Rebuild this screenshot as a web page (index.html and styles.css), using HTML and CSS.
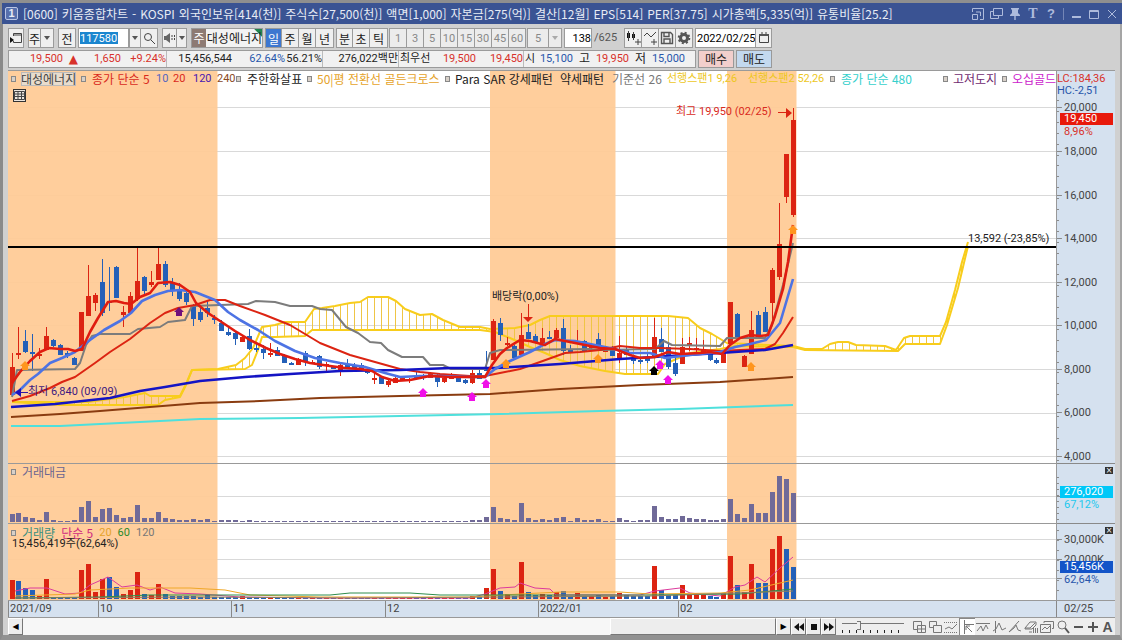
FILE: index.html
```html
<!DOCTYPE html>
<html lang="ko">
<head>
<meta charset="utf-8">
<title>[0600] 키움종합차트</title>
<link rel="stylesheet" href="styles.css">
</head>
<body>
<header class="title">
  <span class="win-no">1</span>
  <h1><span>[0600]</span><span>키움종합차트</span><span>-</span><span>KOSPI</span><span>외국인보유[414(천)]</span><span>주식수[27,500(천)]</span><span>액면[1,000]</span><span>자본금[275(억)]</span><span>결산[12월]</span><span>EPS[514]</span><span>PER[37.75]</span><span>시가총액[5,335(억)]</span><span>유통비율[25.2]</span></h1>
  <nav class="win-tools">
    <button aria-label="화면 축소"><svg width="12" height="12" viewBox="0 0 12 12"><path d="M.5 4V.5h11v11H8M.5 6.5h5v5h-5zM4 4h4.500v4"/></svg></button>
    <button aria-label="화면 복사"><svg width="13" height="12" viewBox="0 0 13 12"><path d="M3.500.5h9v7h-9zM3.500 3.500h-3v7h8v-3"/></svg></button>
    <button aria-label="고정"><svg width="12" height="12" viewBox="0 0 12 12"><path class="solid" d="M2 0h8v1.500H9V5l2 2v1H6.700v4H5.300V8H1V7l2-2V1.500H2z"/></svg></button>
    <button aria-label="글꼴" class="serif">T</button>
    <button aria-label="도움말" class="mark">?</button>
    <i></i>
    <button aria-label="최소화"><svg width="12" height="12" viewBox="0 0 12 12"><path class="thick" d="M2 9h9"/></svg></button>
    <button aria-label="최대화"><svg width="12" height="12" viewBox="0 0 12 12"><path d="M1.500 2.500h9v8h-9zM1.500 3.500h9"/></svg></button>
    <button aria-label="닫기"><svg width="12" height="12" viewBox="0 0 12 12"><path d="M2 2l8 8M10 2l-8 8"/></svg></button>
  </nav>
</header>
<main class="window">
  <form class="toolbar">
    <button type="button" class="b w16" aria-label="메뉴 열기"><svg width="14" height="13" viewBox="0 0 14 13"><path d="M4.500 4V1.500h8v9h-8V9M4.500 3h8"/><path class="fill" d="M1 5v6l4-3z"/></svg></button>
    <div class="pair g4"><button type="button" class="b w13">주</button><button type="button" class="b w13 dd" aria-label="종목 구분"></button></div>
    <button type="button" class="b w18 g4">전</button>
    <div class="pair g2"><input class="code" aria-label="종목코드" value="117580"><button type="button" class="b w12 dd" aria-label="종목 목록"></button><button type="button" class="b w17" aria-label="종목 검색"><svg width="13" height="13" viewBox="0 0 13 13"><circle cx="5" cy="5" r="3.500"/><path d="M8 8l4 4"/></svg></button></div>
    <div class="pair g3"><button type="button" class="b w15" aria-label="소리"><svg width="13" height="12" viewBox="0 0 13 12"><path class="fill grey" d="M1 4h2l4-3v10L3 8H1z"/><path stroke-dasharray="2 1" d="M9 3v6M11.500 3v6"/></svg></button><button type="button" class="b w10 dd" aria-label="소리 설정"></button></div>
    <div class="stock g3"><b>주</b><span>대성에너지</span></div>
    <div class="group g2"><button type="button" class="b w17 on">일</button><button type="button" class="b w17">주</button><button type="button" class="b w17">월</button><button type="button" class="b w18">년</button></div>
    <div class="group g2"><button type="button" class="b w17">분</button><button type="button" class="b w17">초</button><button type="button" class="b w18">틱</button></div>
    <div class="group mins"><button type="button" class="b">1</button><button type="button" class="b">3</button><button type="button" class="b">5</button><button type="button" class="b">10</button><button type="button" class="b">15</button><button type="button" class="b">30</button><button type="button" class="b">45</button><button type="button" class="b">60</button></div>
    <div class="pair mins g2"><select class="sel" aria-label="분 간격"><option>5</option></select><span class="b w13 dd pale"></span></div>
    <input class="count g2" aria-label="조회 개수" value="138"><span class="total">/625</span>
    <div class="pair icons"><button type="button" class="b" aria-label="봉 추가"><svg width="15" height="14" viewBox="0 0 15 14"><path class="fill" d="M1 2h3v5H1zM6 3h3v4H6z"/><path d="M2.500 0v10M7.500 1v8M9 11h6M12 8v6"/></svg></button><button type="button" class="b" aria-label="지표 추가"><svg width="15" height="14" viewBox="0 0 15 14"><path d="M1 5l3-3 4 4 5-5M8 11h6M11 8v6"/></svg></button><button type="button" class="b" aria-label="저장"><svg width="14" height="14" viewBox="0 0 14 14"><path class="save" d="M1.500 1.500h9l2 2v9h-11zM4 2v3.500h5V2M4 12V8h6v4"/></svg></button><button type="button" class="b" aria-label="설정"><svg width="14" height="14" viewBox="0 0 14 14"><circle cx="7" cy="7" r="3.500" class="w3"/><circle cx="7" cy="7" r="5.300" class="w2" stroke-dasharray="2 2.160"/></svg></button></div>
    <div class="pair g2"><input class="date" aria-label="날짜" value="2022/02/25"><button type="button" class="b w17" aria-label="달력"><svg width="12" height="12" viewBox="0 0 12 12"><path d="M1.500 2.500h9v8h-9zM4 0v3M8 0v3"/><path class="w2" d="M1 3h10"/></svg></button></div>
  </form>

  <div class="quote-row">
    <div class="quote">
      <span class="up">19,500</span><span class="up tri">▲</span><span class="up">1,650</span><span class="up">+9.24%</span>
      <span class="sep">15,456,544</span><span class="down">62.64%</span><span>56.21%</span>
      <span class="sep">276,022백만</span><span class="sep left">최우선</span><span class="up">19,500</span><span class="up">19,450</span>
      <span class="sep left">시</span><span class="down">15,100</span><span class="k">고</span><span class="up">19,950</span><span class="k">저</span><span class="down">15,000</span>
    </div>
    <button class="order buy">매수</button>
    <button class="order sell">매도</button>
  </div>

  <section class="chart">
    <div class="plot" id="plot">
      <svg id="canvas" viewBox="8 71 1048 529" preserveAspectRatio="none" role="img" aria-label="대성에너지 일봉 차트"></svg>
      <div class="legend">
        <i></i><span class="boxed">대성에너지</span><i></i><span class="c-red">종가 단순 5</span><span class="c-blue num">10</span><span class="c-red num">20</span><span class="c-indigo num">120</span><span class="c-brown num">240</span>
        <i></i><span>주한화살표</span><i></i><span class="c-orange">50|평 전환선 골든크로스</span><i></i><span>Para SAR 강세패턴</span><span>약세패턴</span><span class="c-grey">기준선 26</span><span class="c-yellow">선행스팬1 9,26</span><span class="c-yellow">선행스팬2 52,26</span>
        <i></i><span class="c-cyan">종가 단순 480</span><i></i><span class="c-plum">고저도지</span><i></i><span class="c-magenta">오십골드</span>
      </div>
      <button class="grid-btn" aria-label="표 보기"><svg width="11" height="11" viewBox="0 0 11 11"><path d="M.5 1.500h10v8H.5zM.5 4h10M.5 6.500h10M4 1.500v8M7.500 1.500v8"/></svg></button>
      <div class="sub amount"><i></i><span class="c-slate">거래대금</span></div>
      <div class="sub volume"><i></i><span class="c-teal">거래량</span><span class="c-pink">단순 5</span><span class="c-orange num">20</span><span class="c-green num">60</span><span class="c-grey num">120</span></div>
    </div>
    <aside class="axis" id="axis">
      <svg id="ticks" viewBox="0 71 59 529" preserveAspectRatio="none"></svg>
    </aside>
  </section>
  <div class="dates" id="dates"></div>

  <footer class="bottom">
    <button class="s" aria-label="왼쪽으로">◀</button>
    <div class="track"><div class="thumb"></div></div>
    <button class="s" aria-label="오른쪽으로">▶</button>
    <button class="s" aria-label="뒤로 감기"><svg width="10" height="8" viewBox="0 0 10 8"><path class="fill" d="M5 0v8L0 4zM10 0v8L5 4z"/></svg></button>
    <button class="s" aria-label="정지"><svg width="8" height="8" viewBox="0 0 8 8"><path class="fill" d="M1 1h6v6H1z"/></svg></button>
    <button class="s" aria-label="앞으로 감기"><svg width="10" height="8" viewBox="0 0 10 8"><path class="fill" d="M0 0v8l5-4zM5 0v8l5-4z"/></svg></button>
    <div class="zoom"><input type="range" aria-label="속도" min="0" max="100" value="25"><div class="marks"></div></div>
    <div class="tools">
      <button aria-label="창 추가"><svg viewBox="0 0 14 14"><path d="M1.500 1.500h8v8h-8z"/><path class="paper" d="M5.500 5.500h8v7h-8zM9.500 6v6M6 9h7"/></svg></button>
      <button aria-label="창 겹침"><svg viewBox="0 0 14 14"><path d="M1.500 1.500h7v6h-7z"/><path class="paper" d="M5.500 5.500h8v7h-8z"/></svg></button>
      <button aria-label="점선"><svg viewBox="0 0 14 14"><path stroke-dasharray="1 1" d="M0 2.500h14M0 12.500h14"/><path d="M1 9l4-2 3 2 5-5"/></svg></button>
      <button aria-label="시작점" class="on"><svg viewBox="0 0 14 14"><path d="M3.500 0v14M3 4.500h10M5 6l6 6M5 6v4M5 6h4"/></svg></button>
      <button aria-label="고점"><svg viewBox="0 0 14 14"><path d="M0 3.500h14M1 11l4-5 2 5 3-6 2 4"/></svg></button>
      <button aria-label="파동"><svg viewBox="0 0 14 14"><path d="M3.500 1v12M1 11l3-2 3-6 3 7 4-2"/></svg></button>
      <button aria-label="추세"><svg viewBox="0 0 14 14"><path d="M1 12L11 1M1 12l5-4 2-3 2 5 3 1"/></svg></button>
      <button aria-label="모두 지우기"><svg viewBox="0 0 14 14"><path d="M1 8l5-6h6v3L8 9H1zM1 8h5l5-5M9.500 8v5M11.500 8v5M13.500 8v5M5 12h3"/></svg></button>
      <button aria-label="차트 저장"><svg viewBox="0 0 14 14"><path d="M4 3V1.500h9.500v7H12M.5 4.500h10v8H.5zM2 10l3-3 2 2 3-3"/></svg></button>
      <button aria-label="확대경"><svg viewBox="0 0 14 14"><circle cx="6" cy="5" r="4"/><path class="w2" d="M9 8l4 5"/></svg></button>
      <button aria-label="축소"><svg viewBox="0 0 14 14"><path class="w2" d="M3 7h9"/></svg></button>
      <button aria-label="확대"><svg viewBox="0 0 14 14"><path class="w2" d="M2 7h10M7 2v10"/></svg></button>
      <button class="auto">A</button>
    </div>
  </footer>
</main>
<script src="chart.js"></script>
</body>
</html>
```
FILE: styles.css
```css
* { box-sizing: border-box; }
body {
  margin: 0;
  min-height: 100vh;
  display: flex;
  flex-direction: column;
  padding-top: 3px;
  background: #8f8f8f;
  font: 12px/14px "Noto Sans CJK KR", sans-serif;
  color: #222;
}
button, input, select { font: inherit; color: inherit; margin: 0; padding: 0; border: 0; background: none; border-radius: 0; }
svg { display: block; }
svg path, svg circle { fill: none; stroke: #444; }
svg .fill { fill: #111; stroke: none; }
svg .grey { fill: #666; }
svg .w2 { stroke-width: 2; stroke: #555; }
svg .w3 { stroke-width: 3; stroke: #555; }
svg .save { stroke: #555; stroke-width: 1.4; }

.title {
  display: flex;
  align-items: center;
  height: 21px;
  margin: 0 0 0 2px;
  padding: 0 3px;
  background: #3a5393;
  color: #e8ecf5;
}
.win-no { width: 13px; height: 13px; border: 1px solid #b9c5e4; border-radius: 2px; text-align: center; font: bold 11px/11px "Liberation Sans", sans-serif; background: #5770ad; }
.title h1 { flex: 1; display: flex; gap: 4px; margin: 0 0 0 5px; font-size: 12px; font-weight: normal; white-space: nowrap; }
.win-tools { display: flex; align-items: center; gap: 6px; padding-right: 1px; }
.win-tools button { min-width: 12px; }
.win-tools svg path { stroke: #aebbdc; }
.win-tools svg .solid { fill: #aebbdc; stroke: none; }
.win-tools svg .thick { stroke-width: 2; }
.win-tools i { width: 1px; height: 12px; background: #7486b6; }
.serif { font: bold 14px/14px "Liberation Serif", serif; color: #aebbdc; }
.mark { font: bold 13px/14px "Liberation Sans", sans-serif; color: #aebbdc; }

.window {
  flex: 1;
  display: flex;
  flex-direction: column;
  padding: 4px 5px 0 5px;
  border: solid #999;
  border-width: 0 2px 5px 3px;
  border-color: #999 #a5a5a5 #919191 #8a8a8a;
  background: #d0d0d0;
}

.toolbar { display: flex; height: 20px; align-items: stretch; font-size: 12px; line-height: 17px; }
.pair, .group { display: flex; }
.b { display: flex; align-items: center; justify-content: center; border: 1px solid #9b9b9b; background: #efefef; overflow: hidden; flex: none; }
.pair .b + .b, .group .b + .b { border-left: 0; }
.w10 { width: 10px; } .w12 { width: 12px; } .w13 { width: 13px; } .w15 { width: 15px; }
.w16 { width: 16px; } .w17 { width: 17px; } .w18 { width: 18px; }
.g2 { margin-left: 2px; } .g3 { margin-left: 4px; } .g4 { margin-left: 4px; }
.dd::before { content: ""; border: 3px solid transparent; border-top: 4px solid #555; border-bottom: 0; }
.pale::before { border-top-color: #aaa; }
.code { width: 51px; border: 1px solid #9b9b9b; background: linear-gradient(#1b86cf, #1b86cf) 1px 3px / 38px 12px no-repeat #fff; color: #fff; padding-left: 1px; }
.code, .count, .date, .total, .mins { font-family: Roboto, "Noto Sans CJK KR", sans-serif; font-size: 11px; }
.stock { display: flex; width: 72px; border: 1px solid #9b9b9b; background: linear-gradient(225deg, #23854f 5px, transparent 6px) #f3f3f3; white-space: nowrap; }
.stock b { width: 14px; text-align: center; background: #8d7a73; color: #fff; font-weight: normal; }
.stock span { padding-left: 1px; }
.on { background: #3c77d0; color: #fff; }
.mins { color: #888; margin-left: 1px; }
.mins .b { width: 18px; background: #ececec; }
.mins .b + .b { width: 17px; }
.sel { width: 22px; appearance: none; border: 1px solid #9b9b9b; background: #ececec; padding-left: 7px; }
.pair.mins .dd { width: 13px; border-left: 0; }
.count { width: 28px; border: 1px solid #9b9b9b; background: #fff; text-align: right; color: #000; }
.total { width: 32px; padding-left: 2px; line-height: 20px; color: #555; }
.icons .b { width: 18px; }
.icons .b + .b { width: 17px; }
.date { width: 60px; border: 1px solid #9b9b9b; border-right: 0; background: #fff; padding-left: 1px; color: #000; }

.quote-row { display: flex; height: 18px; margin: 2px 0 3px; gap: 2px; }
.quote {
  display: grid;
  grid-template-columns: 54px 15px 43px 45px 66px 53px 37px 76px 35px 43px 47px 11px 39px 17px 39px 17px 39px;
  width: 688px;
  padding-right: 6px;
  border: 1px solid #9b9b9b;
  background: #f1f1f1;
  font: 11px/16px Roboto, "Noto Sans CJK KR", sans-serif;
  text-align: right;
  white-space: nowrap;
}
.quote .sep { border-left: 1px solid #bbb; }
.quote .left { text-align: left; padding-left: 1px; }
.quote .k { font-size: 12px; }
.quote .tri { font-family: "DejaVu Sans", sans-serif; font-size: 12px; }
.up { color: #d8322b; }
.down { color: #2856ab; }
.order { width: 36px; border: 1px solid #999; line-height: 14px; }
.buy { background: #f2cfcc; }
.sell { background: #c3d9ef; }

.chart { flex: 1; display: flex; border-top: 1px solid #9a9a9a; margin-top: -1px; }
.plot { position: relative; flex: 1; background: #fff; overflow: hidden; white-space: nowrap; }
.plot > svg, .axis > svg { position: absolute; inset: 0; width: 100%; height: 100%; }
.legend {
  position: absolute;
  inset: 1px 0 auto 3px;
  display: grid;
  grid-template-columns: 10px 60px 11px 64px 17px 20px 24px 19px 11px 60px 10px 128px 10px 105px 52px 55px 81px 82px 11px 102px 10px 49px 10px 44px;
}
.legend i, .sub i { width: 5px; height: 6px; border: 1px solid #888; background: #d8d0c8; align-self: center; }
.num { font-family: Roboto, sans-serif; font-size: 11px; }
.boxed { justify-self: start; background: #e8dccd; color: #444; outline: 1px solid #bbb; outline-offset: -1px; }
.grid-btn { position: absolute; left: 5px; top: 18px; padding: 0; border: 1px solid #333; background: #ece6df; }
.sub { position: absolute; left: 3px; display: flex; gap: 6px; }
.amount { top: 74.5%; }
.volume { top: 86%; }
.note { position: absolute; transform: translateY(-50%); font: 11px/12px Roboto, "Noto Sans CJK KR", sans-serif; }

.c-red { color: #d92a1c; } .c-blue { color: #5566c0; } .c-indigo { color: #4a18b0; } .c-brown { color: #8a4a24; }
.c-orange { color: #e5a32a; } .c-grey { color: #777; } .c-cyan { color: #35d0cc; }
.c-yellow { color: #edc71d; font: 11px/14px Roboto, "Noto Sans CJK KR", sans-serif; }
.c-plum { color: #702a70; } .c-magenta { color: #cc22cc; } .c-slate { color: #6b6590; } .c-teal { color: #3a9080; }
.c-pink { color: #cf2a80; } .c-green { color: #2b8a2b; } .c-dark { color: #222; } .c-purple { color: #401880; }

.axis { position: relative; flex: none; width: 59px; background: #d5e1ef; border-left: 1px solid #999; font: 11px/11px Roboto, sans-serif; }
.axis > svg path { stroke: #888; }
.label { position: absolute; left: 7px; transform: translateY(-50%); color: #444; }
.label.edge { left: 0; }
.label.tag { left: 3px; right: 2px; padding-left: 4px; line-height: 12px; color: #fff; }
.tag.r { background: #e8190b; } .tag.k { background: #00c8f8; } .tag.n { background: #1254c8; }
.label.t-red { color: #d8322b; } .label.t-blue { color: #2856ab; } .label.t-cyan { color: #22c8ee; }
.close { position: absolute; right: 2px; width: 8px; height: 7px; background: #333; color: #fff; font: 8px/7px "DejaVu Sans", sans-serif; }

.dates { position: relative; height: 18px; background: #d5e1ef; border: solid #999; border-width: 1px 0; color: #444; font-family: Roboto, sans-serif; font-size: 11px; }
.dates span { position: absolute; top: 0; height: 16px; border-left: 1px solid #888; padding-left: 1px; line-height: 15px; }
.dates .last { left: auto; right: 0; width: 59px; padding-left: 7px; }

.bottom { display: flex; height: 17px; background: #eee; }
.s { display: flex; align-items: center; justify-content: center; width: 15px; border: 1px solid; border-color: #fff #777 #777 #fff; background: #ededed; color: #000; font: 8px/8px "DejaVu Sans", sans-serif; }
.track { flex: 1; display: flex; justify-content: flex-end; background: #f7f7f7; }
.thumb { width: 22%; border: 1px solid; border-color: #fff #777 #777 #fff; background: #ededed; }
.zoom { width: 72px; padding: 3px 4px 0 6px; }
.zoom input { display: block; width: 100%; height: 9px; appearance: none; background: linear-gradient(#777, #777) 0 2px / 100% 1px no-repeat; }
.zoom input::-webkit-slider-thumb { appearance: none; width: 4px; height: 9px; background: #eee; border: 1px solid #777; border-left: 0; }
.marks { height: 3px; background: repeating-linear-gradient(90deg, #222 0 1px, transparent 1px 7px); }
.tools { display: flex; padding-left: 3px; }
.tools button { display: flex; align-items: center; justify-content: center; width: 16px; flex: none; }
.tools button:nth-last-child(-n+4) { width: 15px; }
.tools svg { width: 14px; height: 14px; }
.tools svg path, .tools svg circle { stroke: #777; }
.tools svg .w2 { stroke: #555; }
.tools svg .paper { fill: #eee; }
.tools .on { background: #fff; border-left: 1px solid #888; border-top: 1px solid #888; }
.tools .auto { font: bold 14px/14px "Liberation Sans", sans-serif; color: #555; }
```
FILE: chart.js
```js
const RED = '#dc2412', BLUE = '#2460b8';
const svg = document.getElementById('canvas');
const NS = 'http://www.w3.org/2000/svg';
const xOf = i => 11.5 + 6.98 * i;

function add(tag, attrs, parent = svg) {
  const el = document.createElementNS(NS, tag);
  for (const k in attrs) el.setAttribute(k, attrs[k]);
  parent.appendChild(el);
}
const rect = (x, y, w, h, fill) => add('rect', { x, y, width: w, height: h, fill });
const path = (d, stroke, w = 1, fill = 'none') => add('path', { d, 'stroke-width': w, style: `stroke:${stroke};fill:${fill}`, 'stroke-linejoin': 'round' });
const pts = s => s.trim().split(/\s+/).map(p => p.split(',').map(Number));
const line = (s, stroke, w) => path('M' + s.trim().split(/\s+/).join('L'), stroke, w);

// Grid, highlighted periods and pane borders
for (const y of [107.5, 151.5, 195.5, 238.5, 282.5, 325.5, 369.5, 413.5, 456.5, 496.5, 539.5, 559.5, 578.5])
  path(`M8 ${y}H1056`, '#d9d9d9');
for (const [x, w] of [[8, 209.5], [490, 125.5], [727, 69.5]])
  add('rect', { x, y: 71, width: w, height: 529, fill: '#ffcb97', opacity: .95 });
path('M8 463.5H1056M8 523.5H1056', '#999');

// Ichimoku cloud
const spanA = '12,402 88,402 110,399 125,397 145,393 150,396 180,396 186,384 192,370 218,369 236,365 245,358 253,348 262,327 275,325 285,322 305,322 314,309 322,308 335,306 350,303 360,302 368,297 388,297 396,301 405,309 420,315 432,314 443,320 460,327 480,327 490,329 515,328 530,325 540,320 550,316 668,316 688,318 700,328 712,334 727,343 770,345 793,346 805,349 822,349 830,344 838,342 848,342 856,345 885,346 896,350 904,338 910,336 940,336 946,322 955,290 962,262 968,242';
const spanB = '12,402 60,405 158,405 165,400 180,397 186,385 192,370 245,369 252,365 258,350 262,337 275,337 305,336 312,330 480,330 495,332 510,338 530,347 545,353 560,360 580,366 605,371 625,374 658,374 665,364 690,353 720,349 735,346 793,347 805,350 898,351 905,344 940,344 947,325 958,288 968,246';
function at(list, x) {
  for (let k = 1; k < list.length; k++) {
    const [x0, y0] = list[k - 1], [x1, y1] = list[k];
    if (x <= x1) return y0 + (y1 - y0) * (x - x0) / (x1 - x0);
  }
  return list[list.length - 1][1];
}
const a = pts(spanA), b = pts(spanB);
let hatch = '';
for (let i = 7; i < 137; i++) {
  const x = Math.round(xOf(i)) + .5;
  hatch += `M${x} ${at(a, x)}V${at(b, x)}`;
}
path(hatch, '#efc545');
line(spanA, '#f8cd1c', 2);
line(spanB, '#f8cd1c', 2);

// Candles: direction, high, body top, body bottom, low
const candles = `R353,367,395,397 R327,353,355,359 B330,341,352,353 B334,352,353,371 R348,354,355,359 R327,336,350,350 B339,340,346,347 B344,345,355,355 B351,353,356,358 B357,358,365,365
R312,312,351,351 R265,296,316,316 R293,295,303,311 B259,282,313,316 B267,301,303,311 B266,267,298,298 R306,312,315,327 R292,296,313,313 R247,281,299,301 B276,277,291,294
R271,282,285,287 R248,264,280,280 B261,264,285,287 B278,283,291,296 B283,289,299,301 B291,293,302,305 B304,306,319,326 B305,312,320,322 B301,308,313,317 B315,318,320,324
B320,323,331,331 B328,332,335,336 B331,333,339,345 R335,337,342,342 B329,336,349,350 B342,348,350,352 B345,349,353,359 R343,353,355,357 B347,350,356,356 B354,355,363,363
B362,363,365,365 R358,359,365,365 B351,353,362,366 R360,362,363,364 B355,356,367,369 R362,364,365,373 B366,367,369,369 R363,365,370,376 B359,364,367,367 B363,366,368,368
B363,365,371,371 B368,370,373,374 R370,378,379,384 B377,377,384,384 R380,381,385,387 R377,378,383,383 R377,378,380,380 R378,379,381,383 B372,376,378,379 B374,376,378,380
R372,373,378,378 B373,375,382,387 R377,378,382,383 R373,375,379,379 B375,377,382,382 B379,380,383,384 R367,373,383,384 B370,373,379,379 B351,367,371,371 R319,321,360,360
B318,323,335,341 R337,343,345,346 B345,346,358,358 R313,335,355,355 B324,332,339,339 B334,336,343,343 R328,338,343,343 B331,337,338,338 R328,330,338,338 B319,328,351,355
B345,350,352,353 R330,341,344,344 B340,341,352,352 R345,346,347,350 B333,339,347,347 R346,348,352,352 B346,348,356,356 R336,353,358,363 B347,349,355,355 B355,359,361,364
B357,360,362,364 B353,358,361,363 R318,337,357,358 B328,339,352,352 B342,347,367,369 B358,363,374,376 R338,347,364,364 R337,343,346,351 R338,348,350,352 R340,349,353,355
B353,354,360,361 B358,360,363,364 R352,353,363,363 R302,302,344,344 B313,314,338,341 R355,356,367,367 R311,330,354,354 B311,315,337,337 B307,312,332,332 R268,270,303,325
R203,244,277,280 R154,154,197,203 R108,120,215,217`.split(/\s+/).map(s => [s[0], ...s.slice(1).split(',').map(Number)]);
candles.forEach(([dir, hi, top, bot, lo], i) => {
  const c = dir === 'R' ? RED : BLUE, x = Math.round(xOf(i));
  rect(x, hi, 1, Math.max(lo - hi, 1), c);
  rect(x - 2, top, 5, Math.max(bot - top, 2), c);
});

// Moving averages and base line
line('12,397 17,370 75,369 80,363 86,345 92,336 100,334 130,334 138,329 160,327 168,322 185,320 192,306 248,304 256,301 275,302 290,306 312,306 320,309 332,310 346,327 358,333 370,342 381,343 388,350 402,357 423,357 430,365 443,365 451,369 485,369 490,353 500,350 590,349 600,350 655,349 664,341 672,345 720,346 727,338 765,338 772,325 783,285 793,243', '#7c7c7c', 2);
line('12,401 30,396 50,388 62,382 75,377 95,363 110,352 130,339 150,323 165,313 178,308 195,305 210,300 225,300 240,306 265,315 290,325 320,343 350,355 375,362 400,369 420,372 440,374 470,376 485,376 500,373 520,369 540,362 565,353 580,352 600,350 620,346 640,348 660,348 690,349 720,351 740,350 765,349 775,344 783,333 793,317', '#dc2412', 2);
line('11,417 60,414 100,411 150,407 200,403 260,401 320,398 400,396 490,394 560,389 640,385 720,382 765,379 793,377', '#8a3c10', 2);
line('11,426 60,426 120,423 200,419 300,418 400,416 500,414 600,411 680,409 793,405', '#4fe0dc', 2);
line('11,407 55,404 110,398 140,391 165,387 200,381 245,377 290,374 340,371 400,370 450,368 495,368 560,364 620,359 670,356 720,353 765,350 793,345', '#1414c4', 2.6);
line('12,395 20,390 30,380 38,374 50,363 62,358 75,352 90,340 104,330 120,321 131,313 142,301 155,295 168,291 180,290 195,292 215,300 228,312 240,320 258,330 275,341 295,351 315,358 340,363 365,367 385,373 400,377 420,376 440,376 470,377 485,377 495,369 510,361 530,352 545,344 555,340 575,341 595,345 610,348 630,353 650,353 665,358 690,355 720,352 735,347 750,344 766,340 780,323 793,279', '#4d73e4', 2.6);
line('12,383 20,372 30,361 40,352 49,348 60,349 68,349 75,351 82,349 90,332 98,318 108,302 116,301 124,303 131,304 140,297 150,293 158,283 170,282 180,285 190,292 196,303 208,313 220,321 235,331 250,340 266,348 280,354 295,359 310,363 330,366 345,368 360,369 372,371 382,377 395,381 410,380 430,376 450,377 470,377 485,377 492,365 500,354 507,348 520,340 530,341 545,345 555,339 570,342 585,345 600,348 615,349 630,355 640,358 655,357 668,352 680,354 700,353 710,352 722,354 730,345 740,338 750,335 760,336 768,335 775,316 783,289 788,262 793,225', '#e01c10', 2.6);
path('M8 247H1056', '#000', 2);

// Signal arrows
const arrow = (x, y, c) => path(`M${x} ${y - 5}l5 5h-2v4h-6v-4h-2z`, 'none', 0, c);
[[25, 366, '#ff961e'], [506, 364, '#ff961e'], [598, 359, '#ff961e'], [751, 367, '#ff961e'], [793, 230, '#ff961e'],
 [179, 312, '#70107c'], [654, 371, '#000'],
 [423, 393, '#f010e8'], [472, 397, '#f010e8'], [486, 384, '#f010e8'], [660, 365, '#f010e8'], [668, 380, '#f010e8']].forEach(v => arrow(...v));
path('M528.500 304V318M778 112.500H788', RED, 1);
path('M523 317h10l-5 5zM786 108v10l6-5z', 'none', 0, RED);
path('M19 392.500H28', '#3018a0');
path('M21 388v9l-6-4.500z', 'none', 0, '#2010b8');

// Trading value and volume
const amount = [8,9,5,4,2,10,2,1,1,2,15,21,5,13,14,7,4,5,17,4,4,10,4,3,2,2,3,2,3,1,2,2,2,1,2,1,...Array(30).fill(1),2,2,5,15,4,3,2,19,4,2,3,2,4,5,1,4,2,2,3,1,1,4,2,1,2,2,16,5,3,3,6,4,3,3,2,2,3,23,8,4,18,9,9,30,46,43,29];
amount.forEach((h, i) => rect(Math.round(xOf(i)) - 2, 522 - h, 5, h, '#706a98'));
const volume = [19,18,11,9,3,20,2,2,2,2,29,35,7,20,22,12,5,9,27,5,4,15,5,3,3,3,3,2,4,2,2,2,2,3,2,2,...Array(30).fill(1),3,2,11,30,8,5,3,37,7,4,5,4,7,8,2,6,3,3,4,2,3,6,4,3,3,3,33,9,4,4,14,5,5,4,3,2,6,43,14,7,35,16,16,50,63,50,32];
const volumeDown = new Set([1, 111, 112]), volumeUp = new Set([13, 68]);
volume.forEach((h, i) => {
  const up = volumeUp.has(i) || (candles[i][0] === 'R' && !volumeDown.has(i));
  rect(Math.round(xOf(i)) - 2, 599 - h, 5, h, up ? RED : BLUE);
});
line('15,591 30,588 47,588 65,594 80,593 90,585 108,577 122,587 137,585 150,590 160,587 175,593 200,594 240,597 330,598 470,598 485,594 500,588 515,587 520,583 535,588 550,589 556,595 640,595 655,591 680,588 690,593 720,596 735,587 745,585 757,577 765,582 780,568 793,557', '#dc3a9c', 1);
line('15,596 75,594 90,590 130,588 190,588 225,590 250,595 320,597 470,597 520,594 560,592 620,592 650,594 720,593 750,590 793,580', '#f0a828', 1);
line('15,598 100,597 150,595 330,595 350,593 410,593 440,595 650,595 740,594 793,589', '#2f8d4c', 1);
line('15,598 200,597 350,598 500,597 650,596 793,591', '#8c8060', 1);

// Text positioned in chart coordinates
function text(parent, cls, str, y, x) {
  const el = document.createElement('span');
  el.className = cls;
  el.textContent = str;
  if (y !== null) el.style.top = (y - 71) / 529 * 100 + '%';
  if (x !== undefined) el.style.left = (x - 8) / 1048 * 100 + '%';
  parent.appendChild(el);
  return el;
}
const plot = document.getElementById('plot'), axis = document.getElementById('axis');
text(plot, 'note c-red', '최고 19,950 (02/25)', 112, 676);
text(plot, 'note c-purple', '최저 6,840 (09/09)', 392, 28);
text(plot, 'note c-dark', '배당락(0,00%)', 297, 492);
text(plot, 'note c-dark', '13,592 (-23,85%)', 239, 968);
text(plot, 'note c-dark', '15,456,419주(62,64%)', 544, 12);

const major = [[107, '20,000'], [151, '18,000'], [195, '16,000'], [238, '14,000'], [282, '12,000'], [325, '10,000'], [369, '8,000'], [412, '6,000'], [456, '4,000'], [539, '30,000K'], [559, '20,000K']];
major.forEach(([y, s]) => text(axis, 'label', s, y));
[['edge t-red', 'LC:184,36', 78], ['edge t-blue', 'HC:-2,51', 90], ['tag r', '19,450', 119], ['t-red', '8,96%', 131],
 ['tag k', '276,020', 492], ['t-cyan', '67,12%', 504], ['tag n', '15,456K', 567], ['t-blue', '62,64%', 579]].forEach(([c, s, y]) => text(axis, 'label ' + c, s, y));
for (const y of [467, 527]) {
  const btn = document.createElement('button');
  btn.className = 'close';
  btn.textContent = '×';
  btn.setAttribute('aria-label', '지표 닫기');
  btn.style.top = (y - 71) / 529 * 100 + '%';
  axis.appendChild(btn);
}
const ticks = document.getElementById('ticks');
let d = 'M0 463.500H59M0 523.500H59';
major.forEach(([y]) => { d += `M0 ${y + .5}h5`; });
for (let y = 100; y < 460; y += 10.9) d += `M0 ${Math.round(y) + .5}h2`;
for (let y = 477; y < 520; y += 6) d += `M0 ${y + .5}h2`;
for (let y = 530; y < 600; y += 10) d += `M0 ${y + .5}h2`;
d += 'M0 496.500h5M0 578.500h5';
add('path', { d }, ticks);

const dates = document.getElementById('dates');
[['2021/09', 8], ['10', 98], ['11', 231], ['12', 385], ['2022/01', 538], ['02', 678]].forEach(([s, x]) => {
  const el = text(dates, '', s, null);
  el.style.left = (x - 8) / 1107 * 100 + '%';
});
text(dates, 'last', '02/25', null);
```
